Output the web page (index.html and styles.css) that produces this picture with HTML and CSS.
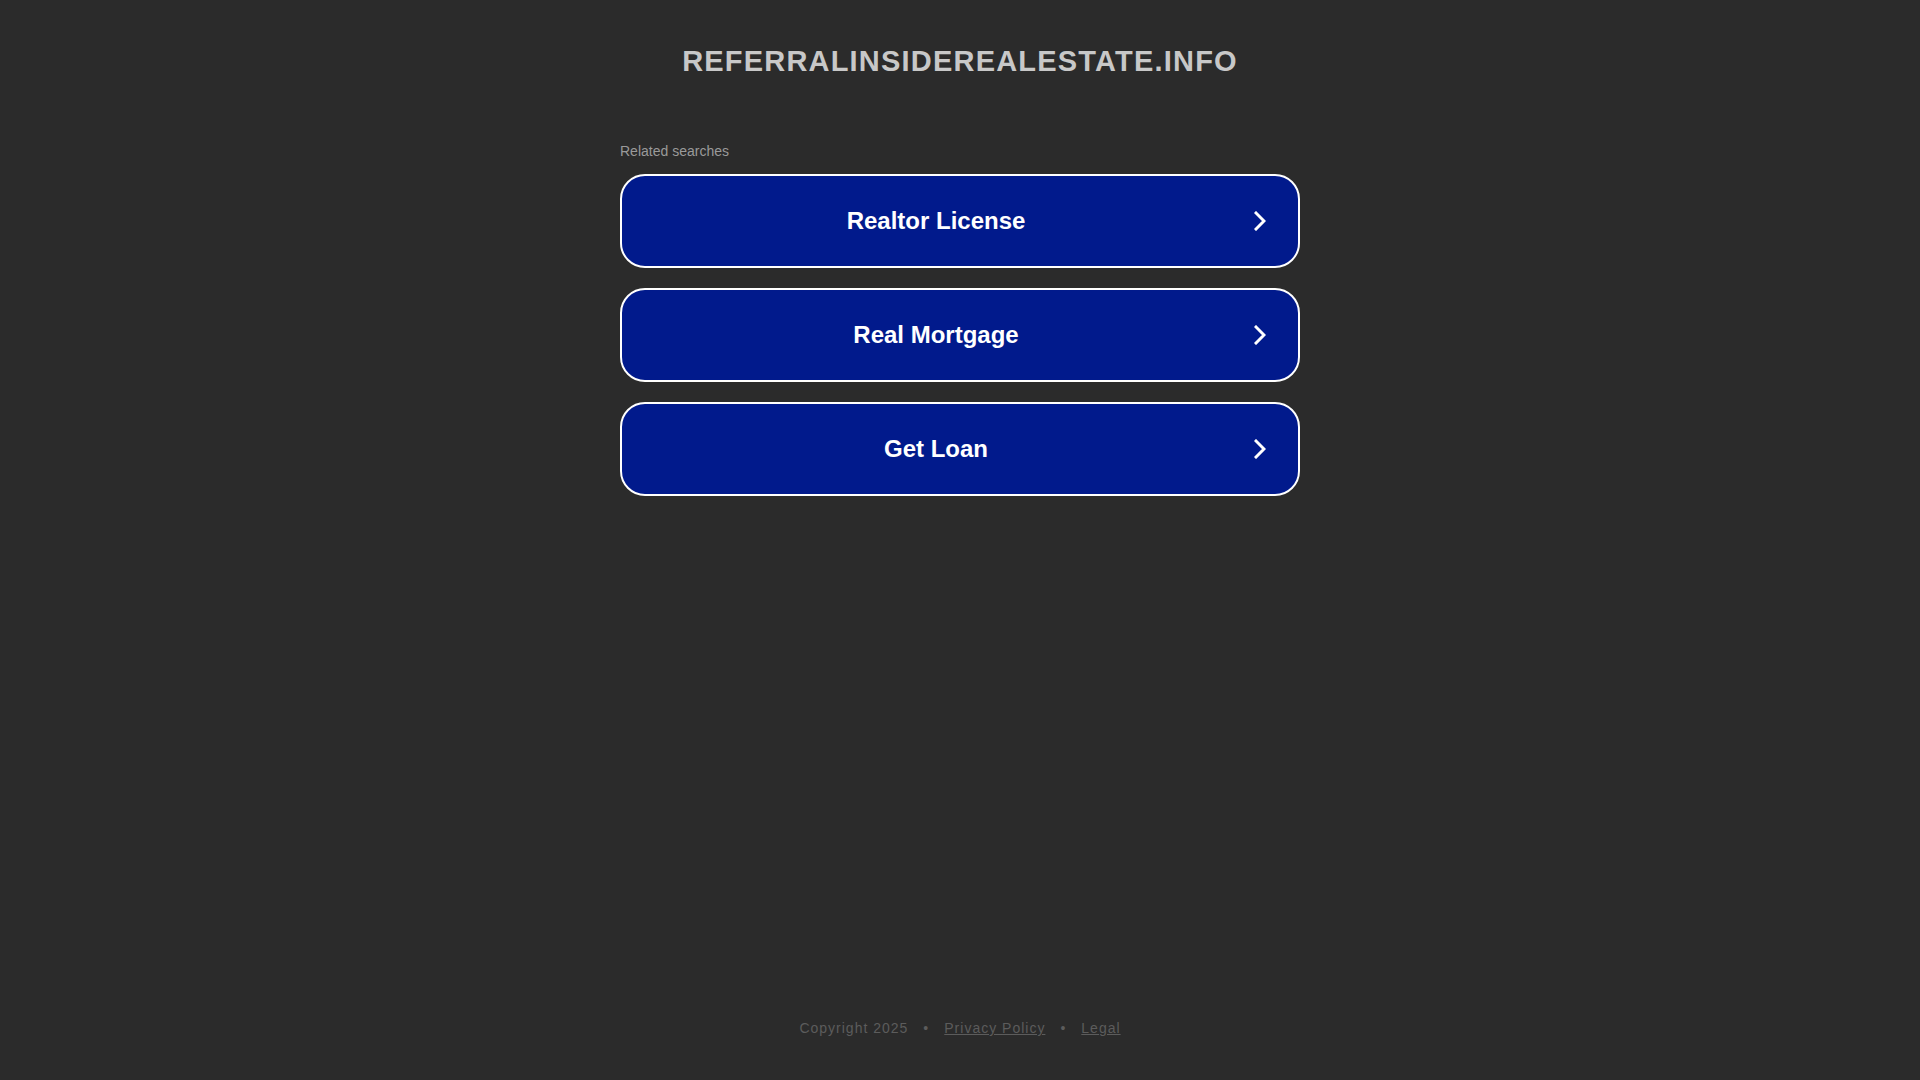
FILE: index.html
```html
<!DOCTYPE html>
<html lang="en">
<head>
<meta charset="utf-8">
<title>referralinsiderealestate.info</title>
<link rel="stylesheet" href="styles.css">
</head>
<body>
<div class="page">
  <header class="header">
    <h1 class="domain">referralinsiderealestate.info</h1>
  </header>
  <main class="main">
    <div class="related">
      <p class="related-title">Related searches</p>
      <ul class="links">
        <li><a class="link" href="#"><span class="link-text">Realtor License</span><svg class="chev" viewBox="0 0 12 20" width="12" height="20"><path d="M2 2 L10 10 L2 18" fill="none" stroke="#fff" stroke-width="3" stroke-linecap="square"/></svg></a></li>
        <li><a class="link" href="#"><span class="link-text">Real Mortgage</span><svg class="chev" viewBox="0 0 12 20" width="12" height="20"><path d="M2 2 L10 10 L2 18" fill="none" stroke="#fff" stroke-width="3" stroke-linecap="square"/></svg></a></li>
        <li><a class="link" href="#"><span class="link-text">Get Loan</span><svg class="chev" viewBox="0 0 12 20" width="12" height="20"><path d="M2 2 L10 10 L2 18" fill="none" stroke="#fff" stroke-width="3" stroke-linecap="square"/></svg></a></li>
      </ul>
    </div>
  </main>
  <footer class="footer">
    <span>Copyright 2025</span>
    <span class="dot">•</span>
    <a href="#" class="foot-link">Privacy Policy</a>
    <span class="dot">•</span>
    <a href="#" class="foot-link">Legal</a>
  </footer>
</div>
</body>
</html>
```
FILE: styles.css
```css
html, body {
  margin: 0;
  padding: 0;
  background: #2b2b2b;
  font-family: "Liberation Sans", Arial, sans-serif;
}
.page {
  min-height: 1080px;
  display: flex;
  flex-direction: column;
}
.header {
  display: flex;
  justify-content: center;
  padding-top: 44px;
}
.domain {
  margin: 0;
  font-size: 29px;
  line-height: 34px;
  font-weight: bold;
  text-transform: uppercase;
  letter-spacing: 1.2px;
  color: #c8c8c8;
}
.main {
  display: flex;
  justify-content: center;
  padding-top: 65px;
  flex: 1;
}
.related {
  width: 680px;
}
.related-title {
  margin: 0 0 15px 0;
  font-size: 14px;
  line-height: 16px;
  color: #9a9a9a;
}
.links {
  list-style: none;
  margin: 0;
  padding: 0;
  display: flex;
  flex-direction: column;
  gap: 20px;
}
.link {
  box-sizing: border-box;
  height: 94px;
  display: flex;
  align-items: center;
  padding: 0 32px 0 0;
  border: 2px solid #ffffff;
  border-radius: 25px;
  background: #011a8c;
  text-decoration: none;
}
.link-text {
  flex: 1;
  text-align: center;
  font-size: 24px;
  font-weight: bold;
  color: #ffffff;
  padding-right: 4px;
}
.chev {
  display: block;
  flex: none;
}
.footer {
  display: flex;
  justify-content: center;
  align-items: center;
  gap: 13px;
  padding-bottom: 43px;
  font-size: 14px;
  line-height: 18px;
  letter-spacing: 1px;
  color: #5c5c5c;
}
.foot-link {
  color: #5c5c5c;
}
.dot {
  margin: 0 2px;
}
```
